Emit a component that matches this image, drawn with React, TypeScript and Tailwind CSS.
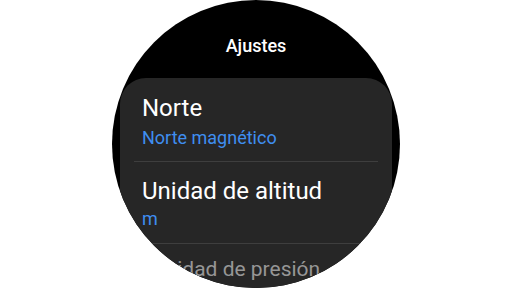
export default function App() {
  return (
    <div className="w-[512px] h-[288px] bg-white flex items-center justify-center font-['Roboto',_sans-serif]">
      {/* Watch face */}
      <div className="w-[288px] h-[288px] rounded-full bg-black overflow-hidden flex flex-col items-center">
        <div className="pt-[36px] text-[18px] leading-[20px] font-medium text-white">Ajustes</div>

        <div className="mt-[22px] w-[272px] flex-1 rounded-t-[26px] bg-[#262626] pt-[1px]">
          {/* Norte */}
          <div className="px-[22px] pt-[15px] pb-[13px]">
            <p className="text-[24px] leading-[28px] text-white">Norte</p>
            <p className="mt-[5px] text-[18px] leading-[21px] text-[#3f8ef0]">Norte magnético</p>
          </div>
          <div className="mx-[14px] h-px bg-[#3e3e3e]" />

          {/* Unidad de altitud */}
          <div className="px-[22px] pt-[15px] pb-[14px]">
            <p className="text-[24px] leading-[28px] text-white">Unidad de altitud</p>
            <p className="mt-[3px] text-[18px] leading-[21px] text-[#3f8ef0]">m</p>
          </div>
          <div className="mx-[14px] h-px bg-[#3e3e3e]" />

          {/* Unidad de presión (fading out at the bottom) */}
          <div className="pl-[32px] pt-[13px]">
            <p className="text-[21px] leading-[24px] text-[#969696]">Unidad de presión</p>
          </div>
        </div>
      </div>
    </div>
  );
}
